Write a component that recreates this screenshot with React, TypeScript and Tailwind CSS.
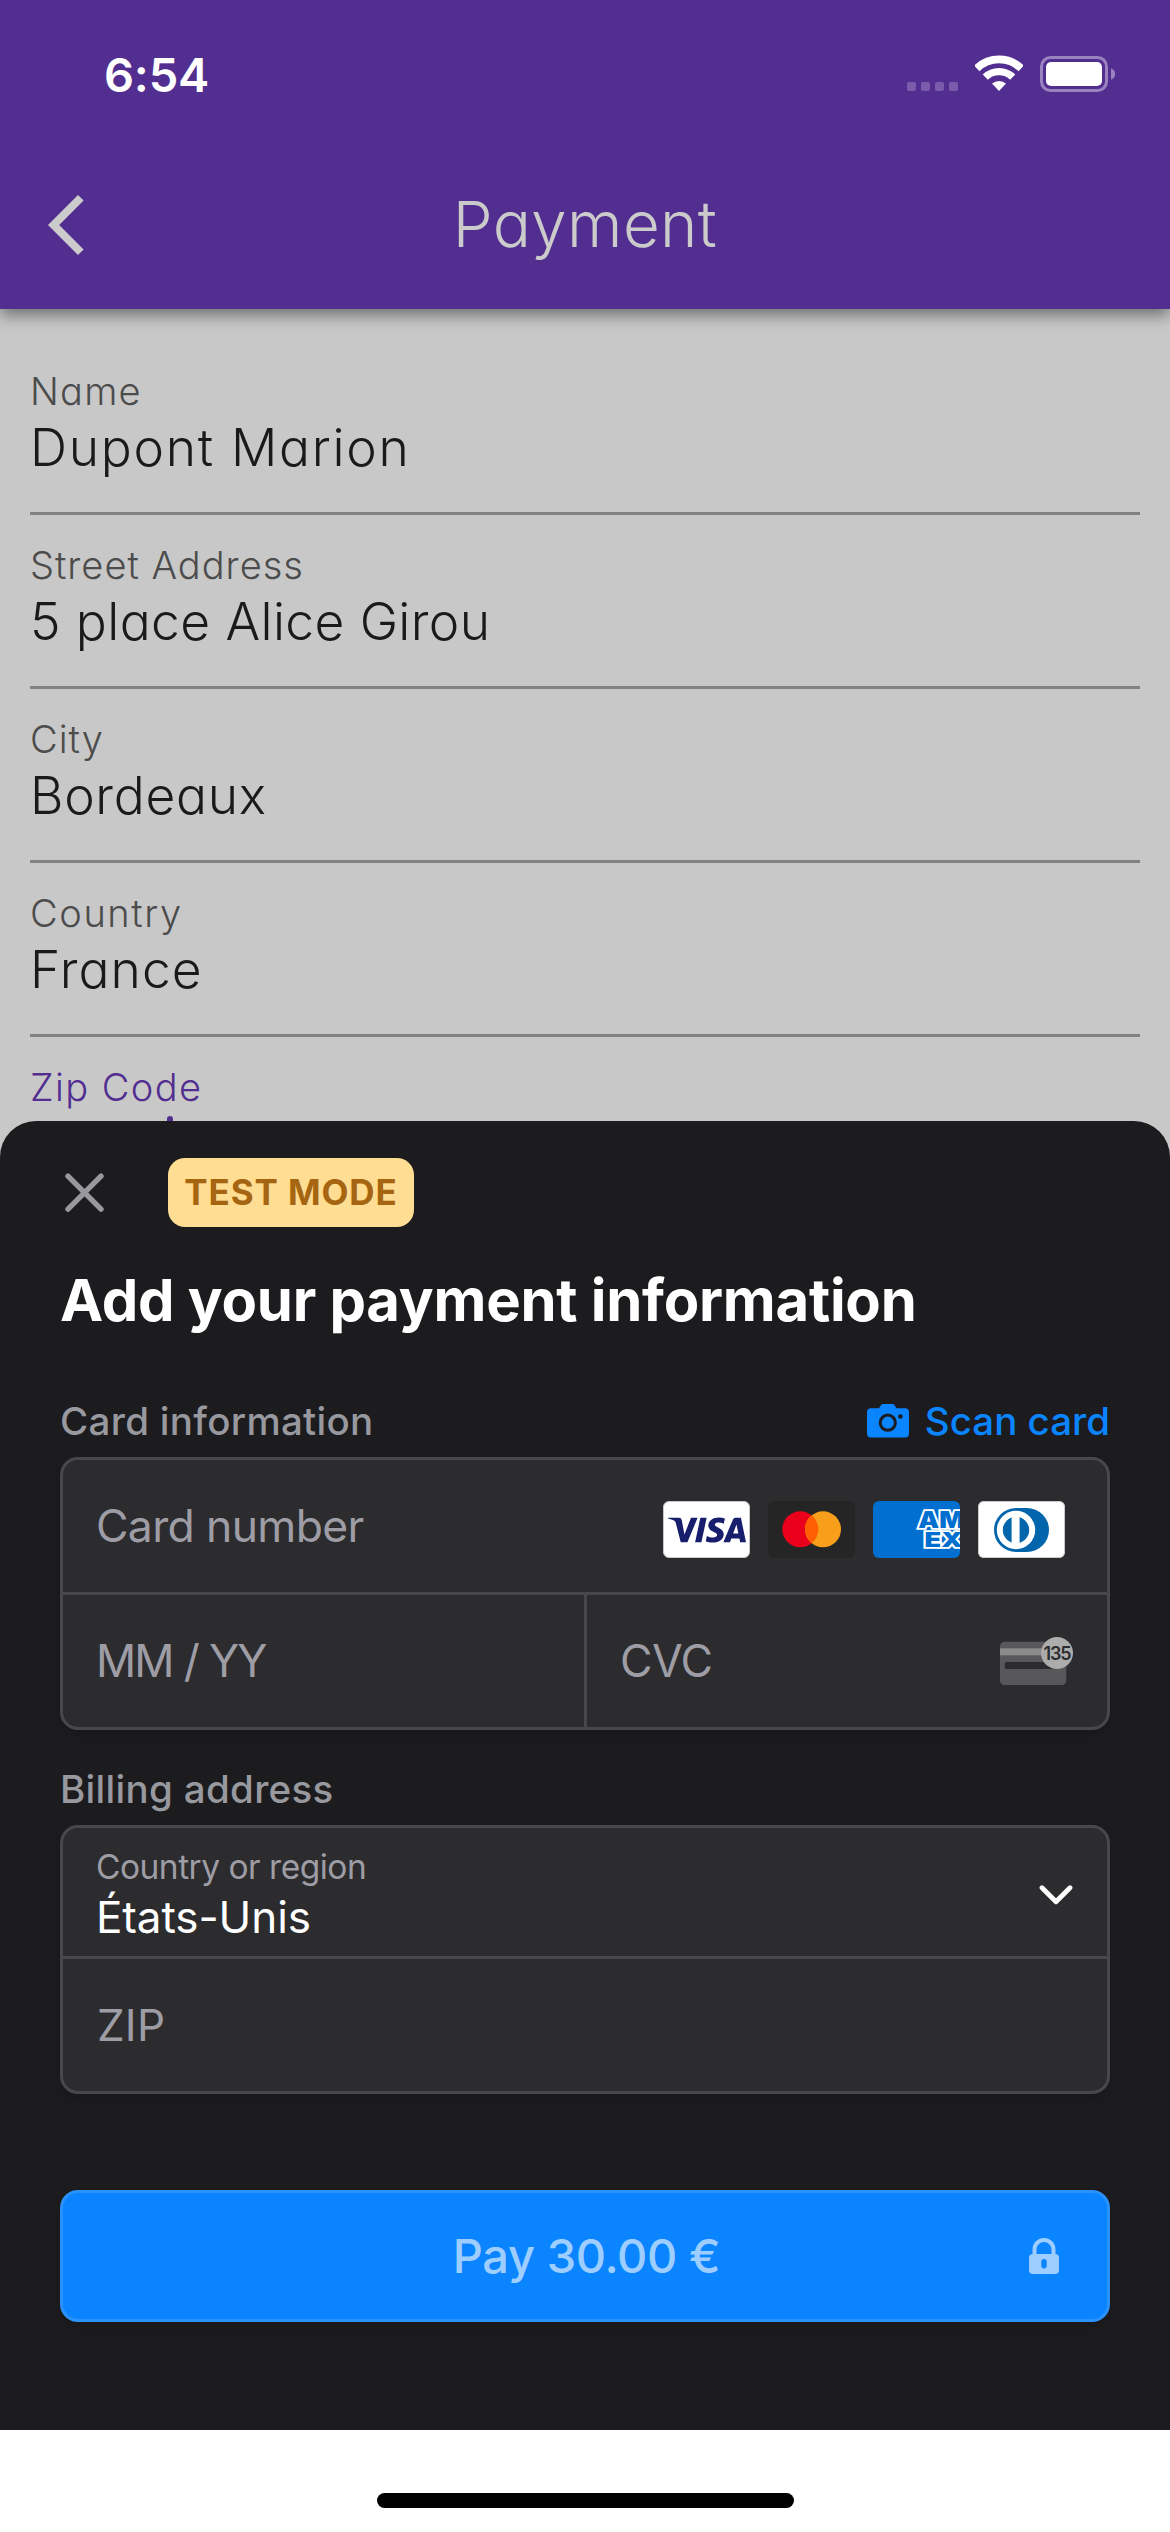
import { SiVisa } from "react-icons/si";

const fields = [
  { label: "Name", value: "Dupont Marion", labelTrack: "tracking-[1.2px]", valueTrack: "tracking-[1.7px]" },
  { label: "Street Address", value: "5 place Alice Girou", labelTrack: "tracking-[1px]", valueTrack: "tracking-[0.4px]" },
  { label: "City", value: "Bordeaux", labelTrack: "tracking-[1px]", valueTrack: "tracking-[0.7px]" },
  { label: "Country", value: "France", labelTrack: "tracking-[1.6px]", valueTrack: "tracking-[1.1px]" },
];

function StatusBar() {
  return (
    <div className="flex h-[141px] items-start justify-between pr-[55px] pl-[104px]">
      <span className="mt-[45px] text-[47px] leading-[60px] font-semibold tracking-[-0.2px] text-white">6:54</span>
      <div className="mt-[55px] flex h-[37px] items-end">
        <div className="mb-px flex gap-[5px]">
          <i className="size-[9px] rounded-[2px] bg-[#7a5bac]" />
          <i className="size-[9px] rounded-[2px] bg-[#7a5bac]" />
          <i className="size-[9px] rounded-[2px] bg-[#7a5bac]" />
          <i className="size-[9px] rounded-[2px] bg-[#7a5bac]" />
        </div>
        <svg className="mb-px ml-[17px]" width="48" height="36" viewBox="0 0 48 36" fill="none">
          <path d="M1.8 13.4a32 32 0 0 1 44.4 0" stroke="#fff" strokeWidth="7.8" />
          <path d="M10.3 22.1a19.8 19.8 0 0 1 27.4 0" stroke="#fff" strokeWidth="7.4" />
          <path d="M24 36l-7-7.4a11 11 0 0 1 14 0z" fill="#fff" />
        </svg>
        <svg className="ml-[17px]" width="75" height="36" viewBox="0 0 75 36" fill="none">
          <rect x="1.5" y="1.5" width="65" height="33" rx="9" stroke="#9a82be" strokeWidth="3" />
          <rect x="6" y="6" width="56" height="24" rx="5" fill="#fff" />
          <path d="M71 12.2c2.7 1 4.2 3.2 4.2 5.8s-1.5 4.8-4.2 5.8z" fill="#9a82be" />
        </svg>
      </div>
    </div>
  );
}

function Header() {
  return (
    <header className="relative z-10 h-[309px] bg-[#522e90] shadow-[0_6px_15px_rgba(0,0,0,0.45)]">
      <StatusBar />
      <div className="grid h-[168px] grid-cols-[1fr_auto_1fr] items-center pr-[48px] pl-[48px]">
        <svg width="36" height="60" viewBox="0 0 36 60" fill="#cbcbcb">
          <path d="M30 0l5.6 5.6L11.2 30l24.4 24.4L30 60 0 30z" />
        </svg>
        <h1 className="pb-[2px] text-[63.5px] leading-[80px] font-[345] tracking-[0.4px] text-[#cbcbcb] [font-feature-settings:'cv11']">
          Payment
        </h1>
      </div>
    </header>
  );
}

function FormFields() {
  return (
    <main className="h-[812px] overflow-hidden px-[30px] pt-[32px] [font-feature-settings:'cv11']">
      {fields.map((f) => (
        <div key={f.label} className="h-[174px] border-b-[3px] border-[#828282] pt-[26px]">
          <div className={`text-[38px] leading-[48px] font-[320] text-[#4c4c4c] ${f.labelTrack}`}>{f.label}</div>
          <div className={`mt-[2px] text-[51.5px] leading-[60px] font-[340] text-[#1a1a1a] ${f.valueTrack}`}>{f.value}</div>
        </div>
      ))}
      <div className="pt-[26px]">
        <div className="text-[38px] leading-[48px] font-[320] tracking-[1.4px] text-[#522e90]">Zip Code</div>
        <div className="mt-[5px] ml-[137px] h-[50px] w-[6px] rounded-full bg-[#522e90]" />
      </div>
    </main>
  );
}

function CardBrands() {
  return (
    <div className="flex gap-[18px] pt-[7px]">
      <div className="flex h-[57px] w-[87px] items-center justify-center overflow-hidden rounded-[6px] border border-[#c9c9cb] bg-white pt-px text-[#171e6c]">
        <SiVisa size={78} className="shrink-0" />
      </div>
      <div className="h-[57px] w-[87px] overflow-hidden rounded-[6px] bg-[#252525]">
        <svg width="87" height="57" viewBox="0 0 87 57">
          <circle cx="32.3" cy="28.3" r="18" fill="#eb001b" />
          <circle cx="55" cy="28.3" r="18" fill="#f79e1b" />
          <path d="M43.65 14.33a18 18 0 0 1 0 27.94a18 18 0 0 1 0-27.94z" fill="#ff5f00" />
        </svg>
      </div>
      <div className="h-[57px] w-[87px] overflow-hidden rounded-[6px] bg-[#006fcf]">
        <svg width="87" height="57" viewBox="0 0 87 57" fontFamily="Inter" fontWeight="900" fill="#006fcf" stroke="#fff" strokeWidth="3.6" paintOrder="stroke">
          <text x="45.3" y="26.6" fontSize="22.5" textLength="46" lengthAdjust="spacingAndGlyphs">AM</text>
          <text x="51.5" y="45.6" fontSize="20.5" textLength="38" lengthAdjust="spacingAndGlyphs">EX</text>
        </svg>
      </div>
      <div className="h-[57px] w-[87px] overflow-hidden rounded-[6px] bg-white">
        <svg width="87" height="57" viewBox="0 0 87 57">
          <rect x="0.5" y="0.5" width="86" height="56" rx="5.5" fill="none" stroke="#c9c9cb" />
          <path d="M38 7h11a22 22 0 0 1 0 44H38a22 22 0 0 1 0-44z" fill="#0165ac" />
          <circle cx="38" cy="29" r="19.2" fill="#fff" />
          <circle cx="38" cy="29" r="13.2" fill="#0165ac" />
          <rect x="33.6" y="15" width="8" height="28" fill="#fff" />
        </svg>
      </div>
    </div>
  );
}

function CvcIcon() {
  return (
    <svg className="overflow-visible" width="73" height="48" viewBox="0 0 73 48">
      <rect x="0" y="4.7" width="66.3" height="43.3" rx="4.5" fill="#58585a" />
      <rect x="0" y="11.3" width="60" height="7" fill="#8b8b8c" />
      <rect x="4.7" y="25" width="56" height="7" rx="1.5" fill="#2c2c2e" />
      <circle cx="57" cy="16" r="16" fill="#acacad" />
      <text x="56.9" y="22.5" fontFamily="Inter" fontSize="18" fontWeight="600" textAnchor="middle" letterSpacing="-1.2" fill="#2c2c2e">
        135
      </text>
    </svg>
  );
}

function PaymentSheet() {
  return (
    <section className="h-[1309px] rounded-t-[36px] bg-[#1c1c1e] px-[60px] pt-[37px]">
      <div className="flex items-center pl-[5px]">
        <svg width="39" height="39" viewBox="0 0 39 39" fill="none" stroke="#98989f" strokeWidth="5.4" strokeLinecap="round">
          <path d="M3 3.2l33 33M36 3.2l-33 33" />
        </svg>
        <div className="ml-[64px] flex h-[69px] w-[246px] items-center justify-center rounded-[17px] bg-[#ffdd93] text-[35px] font-bold tracking-[0.9px] text-[#a66511]">
          TEST MODE
        </div>
      </div>

      <h2 className="mt-[37px] text-[58px] leading-[72px] font-bold tracking-[-0.25px] whitespace-nowrap text-white">
        Add your payment information
      </h2>

      <div className="mt-[61px] flex h-[48px] items-center justify-between text-[38.5px] leading-[48px] font-[470]">
        <span className="tracking-[0.3px] text-[#98989f]">Card information</span>
        <span className="flex items-center text-[#0a84ff]">
          <svg className="mr-[16px]" width="42" height="34" viewBox="0 0 42 34" fill="#0a84ff">
            <path d="M4 4.3h8l1.6-2.6C14.3.6 15.2 0 16.5 0H25c1.3 0 2.2.6 2.9 1.7l1.6 2.6H38a4 4 0 0 1 4 4v21.200a4 4 0 0 1-4 4H4a4 4 0 0 1-4-4V8.300a4 4 0 0 1 4-4z" />
            <circle cx="20.8" cy="18.7" r="7.6" stroke="#1c1c1e" strokeWidth="3" />
            <circle cx="33.4" cy="12.5" r="2.3" fill="#1c1c1e" />
          </svg>
          <span>Scan card</span>
        </span>
      </div>

      <div className="mt-[12px] h-[273px] rounded-[18px] border-[3px] border-[#48484a] bg-[#2c2c2e] text-[44.5px] text-[#9e9da5] shadow-[0_6px_12px_rgba(0,0,0,0.12)]">
        <div className="flex h-[135px] items-center justify-between border-b-[3px] border-[#48484a] pr-[42px] pl-[33px]">
          <span className="tracking-[-0.65px]">Card number</span>
          <CardBrands />
        </div>
        <div className="flex h-[132px]">
          <div className="flex w-[524px] items-center border-r-[3px] border-[#48484a] pl-[33px] tracking-[-1.9px] [word-spacing:0.5px]">MM / YY</div>
          <div className="flex flex-1 items-center justify-between pr-[34px] pl-[33px]">
            <span className="tracking-[-0.6px]">CVC</span>
            <CvcIcon />
          </div>
        </div>
      </div>

      <div className="mt-[35px] text-[38.5px] leading-[48px] font-[470] tracking-[0.3px] text-[#98989f]">Billing address</div>

      <div className="mt-[12px] h-[269px] rounded-[18px] border-[3px] border-[#48484a] bg-[#2c2c2e] shadow-[0_6px_12px_rgba(0,0,0,0.12)]">
        <div className="flex h-[131px] items-center justify-between border-b-[3px] border-[#48484a] pr-[34px] pl-[33px]">
          <div className="pt-[6px]">
            <div className="text-[33.5px] leading-[40px] tracking-[-0.5px] text-[#9e9da5]">Country or region</div>
            <div className="mt-[3px] text-[44px] leading-[54px] tracking-[-0.1px] text-white">États-Unis</div>
          </div>
          <svg className="mt-[5px]" width="34" height="20" viewBox="0 0 34 20" fill="none" stroke="#fff" strokeWidth="4.8" strokeLinecap="round" strokeLinejoin="round">
            <path d="M3 2.7l14 14 14-14" />
          </svg>
        </div>
        <div className="flex h-[132px] items-center pl-[34px] text-[44px] tracking-[0.2px] text-[#9e9da5]">ZIP</div>
      </div>

      <button className="mt-[96px] grid h-[132px] w-full grid-cols-[1fr_auto_1fr] items-center rounded-[18px] border-[3px] border-[#2b92fc] bg-[#0a84ff] text-[#9dceff] shadow-[0_6px_12px_rgba(0,0,0,0.12)]">
        <span />
        <span className="pl-[3px] text-[47px] font-[470] tracking-[-0.4px]">Pay 30.00 €</span>
        <svg className="mr-[48px] justify-self-end" width="30" height="36" viewBox="0 0 30 36" fill="none">
          <path d="M5.5 18v-6.500a9.500 9.500 0 0 1 19 0V18" stroke="#9dceff" strokeWidth="4" />
          <rect y="16" width="30" height="20" rx="4" fill="#9dceff" />
          <rect x="12.3" y="21" width="5.4" height="9.5" rx="2.7" fill="#0a84ff" />
        </svg>
      </button>
    </section>
  );
}

export default function App() {
  return (
    <div className="h-[2532px] w-[1170px] overflow-hidden bg-[#c8c8c8] font-['Inter',sans-serif]">
      <Header />
      <FormFields />
      <PaymentSheet />
      <footer className="h-[102px] bg-white pt-[63px]">
        <div className="mx-auto h-[15px] w-[417px] rounded-full bg-black" />
      </footer>
    </div>
  );
}
